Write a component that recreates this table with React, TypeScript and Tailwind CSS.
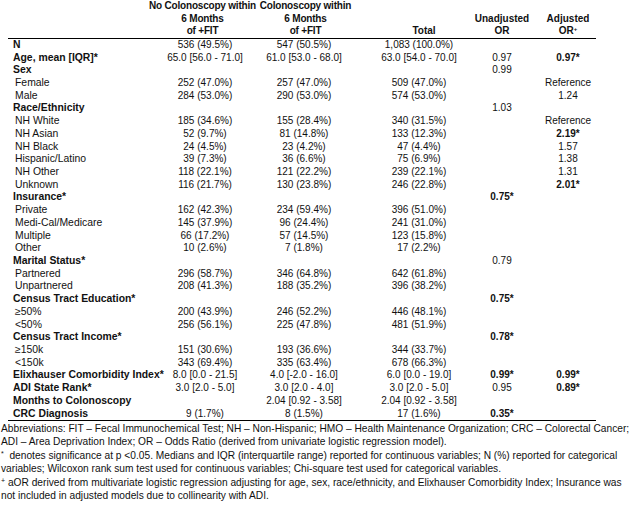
const rows: {
  label: string;
  head?: boolean;
  c1?: string;
  c2?: string;
  tot?: string;
  un?: string;
  unB?: boolean;
  adj?: string;
  adjB?: boolean;
}[] = [
  { label: 'N', head: true, c1: '536 (49.5%)', c2: '547 (50.5%)', tot: '1,083 (100.0%)' },
  { label: 'Age, mean [IQR]*', head: true, c1: '65.0 [56.0 - 71.0]', c2: '61.0 [53.0 - 68.0]', tot: '63.0 [54.0 - 70.0]', un: '0.97', adj: '0.97*', adjB: true },
  { label: 'Sex', head: true, un: '0.99' },
  { label: 'Female', c1: '252 (47.0%)', c2: '257 (47.0%)', tot: '509 (47.0%)', adj: 'Reference' },
  { label: 'Male', c1: '284 (53.0%)', c2: '290 (53.0%)', tot: '574 (53.0%)', adj: '1.24' },
  { label: 'Race/Ethnicity', head: true, un: '1.03' },
  { label: 'NH White', c1: '185 (34.6%)', c2: '155 (28.4%)', tot: '340 (31.5%)', adj: 'Reference' },
  { label: 'NH Asian', c1: '52 (9.7%)', c2: '81 (14.8%)', tot: '133 (12.3%)', adj: '2.19*', adjB: true },
  { label: 'NH Black', c1: '24 (4.5%)', c2: '23 (4.2%)', tot: '47 (4.4%)', adj: '1.57' },
  { label: 'Hispanic/Latino', c1: '39 (7.3%)', c2: '36 (6.6%)', tot: '75 (6.9%)', adj: '1.38' },
  { label: 'NH Other', c1: '118 (22.1%)', c2: '121 (22.2%)', tot: '239 (22.1%)', adj: '1.31' },
  { label: 'Unknown', c1: '116 (21.7%)', c2: '130 (23.8%)', tot: '246 (22.8%)', adj: '2.01*', adjB: true },
  { label: 'Insurance*', head: true, un: '0.75*', unB: true },
  { label: 'Private', c1: '162 (42.3%)', c2: '234 (59.4%)', tot: '396 (51.0%)' },
  { label: 'Medi-Cal/Medicare', c1: '145 (37.9%)', c2: '96 (24.4%)', tot: '241 (31.0%)' },
  { label: 'Multiple', c1: '66 (17.2%)', c2: '57 (14.5%)', tot: '123 (15.8%)' },
  { label: 'Other', c1: '10 (2.6%)', c2: '7 (1.8%)', tot: '17 (2.2%)' },
  { label: 'Marital Status*', head: true, un: '0.79' },
  { label: 'Partnered', c1: '296 (58.7%)', c2: '346 (64.8%)', tot: '642 (61.8%)' },
  { label: 'Unpartnered', c1: '208 (41.3%)', c2: '188 (35.2%)', tot: '396 (38.2%)' },
  { label: 'Census Tract Education*', head: true, un: '0.75*', unB: true },
  { label: '≥50%', c1: '200 (43.9%)', c2: '246 (52.2%)', tot: '446 (48.1%)' },
  { label: '<50%', c1: '256 (56.1%)', c2: '225 (47.8%)', tot: '481 (51.9%)' },
  { label: 'Census Tract Income*', head: true, un: '0.78*', unB: true },
  { label: '≥150k', c1: '151 (30.6%)', c2: '193 (36.6%)', tot: '344 (33.7%)' },
  { label: '<150k', c1: '343 (69.4%)', c2: '335 (63.4%)', tot: '678 (66.3%)' },
  { label: 'Elixhauser Comorbidity Index*', head: true, c1: '8.0 [0.0 - 21.5]', c2: '4.0 [-2.0 - 16.0]', tot: '6.0 [0.0 - 19.0]', un: '0.99*', unB: true, adj: '0.99*', adjB: true },
  { label: 'ADI State Rank*', head: true, c1: '3.0 [2.0 - 5.0]', c2: '3.0 [2.0 - 4.0]', tot: '3.0 [2.0 - 5.0]', un: '0.95', adj: '0.89*', adjB: true },
  { label: 'Months to Colonoscopy', head: true, c2: '2.04 [0.92 - 3.58]', tot: '2.04 [0.92 - 3.58]' },
  { label: 'CRC Diagnosis', head: true, c1: '9 (1.7%)', c2: '8 (1.5%)', tot: '17 (1.6%)', un: '0.35*', unB: true },
];

// label | no colonoscopy | colonoscopy (+ spacing) | total | unadjusted | adjusted
const cols = 'grid grid-cols-[142px_108px_122px_84px_76px_56px]';
const hcell = 'flex flex-col items-center justify-end';

export default function App() {
  return (
    <div className="w-[640px] h-[514px] bg-white text-[#111] text-[10.4px] font-['Liberation_Sans',Arial,sans-serif] overflow-hidden">
      <div className="ml-[8px] w-[588px]">
        <div className={`${cols} text-[10px] leading-[12.6px] font-bold whitespace-nowrap border-b-[1.5px] border-black`}>
          <div />
          <div className={`${hcell} pr-[3px] tracking-[-0.2px]`}>
            <span>No Colonoscopy within</span>
            <span>6 Months</span>
            <span>of +FIT</span>
          </div>
          <div className={`${hcell} pl-[3px] pr-[30px] tracking-[-0.2px]`}>
            <span>Colonoscopy within</span>
            <span>6 Months</span>
            <span>of +FIT</span>
          </div>
          <div className={`${hcell} pl-[4px]`}>Total</div>
          <div className={hcell}>
            <span>Unadjusted</span>
            <span>OR</span>
          </div>
          <div className={hcell}>
            <span>Adjusted</span>
            <span>OR<sup className="text-[6px]">+</sup></span>
          </div>
        </div>

        <div className="border-b-[1.5px] border-black">
          {rows.map((r, i) => (
            <div key={i} className={`${cols} h-[12.72px] leading-[12.72px] whitespace-nowrap`}>
              <div className={r.head ? 'pl-[5px] font-bold' : 'pl-[7px]'}>{r.label}</div>
              <div className="text-center text-[10px] pl-[2px]">{r.c1}</div>
              <div className="text-center text-[10px] pr-[30px]">{r.c2}</div>
              <div className="text-center text-[10px] pr-[6px]">{r.tot}</div>
              <div className={`text-center text-[10px] ${r.unB ? 'font-bold' : ''}`}>{r.un}</div>
              <div className={`text-center text-[10px] ${r.adjB ? 'font-bold' : ''}`}>{r.adj}</div>
            </div>
          ))}
        </div>
      </div>

      <div className="pl-[1px] pt-[1px] text-[10.2px] leading-[13px] whitespace-nowrap">
        <p>
          Abbreviations: FIT – Fecal Immunochemical Test; NH – Non-Hispanic; HMO – Health Maintenance Organization; CRC – Colorectal Cancer;
          <br />
          ADI – Area Deprivation Index; OR – Odds Ratio (derived from univariate logistic regression model).
        </p>
        <p className="mt-[1px]">
          <sup className="text-[7px]">*</sup>&nbsp; denotes significance at p &lt;0.05. Medians and IQR (interquartile range) reported for continuous variables; N (%) reported for categorical
          <br />
          variables; Wilcoxon rank sum test used for continuous variables; Chi-square test used for categorical variables.
        </p>
        <p className="mt-[1px]">
          <sup className="text-[7px]">+</sup> aOR derived from multivariate logistic regression adjusting for age, sex, race/ethnicity, and Elixhauser Comorbidity Index; Insurance was
          <br />
          not included in adjusted models due to collinearity with ADI.
        </p>
      </div>
    </div>
  );
}
